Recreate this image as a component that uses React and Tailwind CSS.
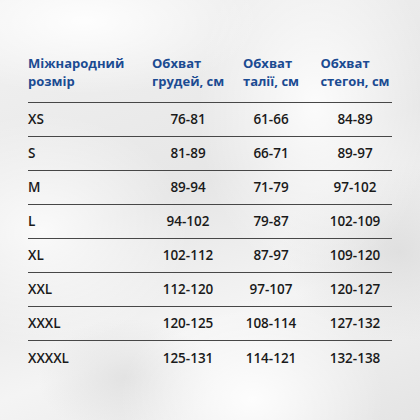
import React from 'react'

const rows = [
  ['XS', '76-81', '61-66', '84-89'],
  ['S', '81-89', '66-71', '89-97'],
  ['M', '89-94', '71-79', '97-102'],
  ['L', '94-102', '79-87', '102-109'],
  ['XL', '102-112', '87-97', '109-120'],
  ['XXL', '112-120', '97-107', '120-127'],
  ['XXXL', '120-125', '108-114', '127-132'],
  ['XXXXL', '125-131', '114-121', '132-138'],
]

const grid = 'grid grid-cols-[124px_72px_94px_74px]'

const App = () => {
  return (
    <div
      className="relative h-[420px] w-[420px] overflow-hidden bg-[#ededed]"
      style={{ fontFamily: '"Open Sans", "DejaVu Sans", sans-serif' }}
    >
      {/* Silk background */}
      <div className="pointer-events-none absolute inset-0 bg-[radial-gradient(60%_25%_at_20%_5%,rgba(255,255,255,0.9),transparent_70%),radial-gradient(40%_60%_at_75%_25%,rgba(255,255,255,0.85),transparent_70%),radial-gradient(50%_40%_at_10%_55%,rgba(255,255,255,0.8),transparent_70%),radial-gradient(45%_35%_at_60%_95%,rgba(255,255,255,0.9),transparent_70%),radial-gradient(40%_30%_at_95%_60%,rgba(215,215,215,0.7),transparent_70%),radial-gradient(30%_20%_at_30%_90%,rgba(220,220,220,0.7),transparent_70%),linear-gradient(160deg,#f2f2f2,#e6e6e6_45%,#f4f4f4_70%,#e4e4e4)]" />

      <div className="relative px-[28px] pt-[54px]">
        {/* Header */}
        <div className={`${grid} border-b border-[#474747] pb-[12px] text-[13px] font-bold leading-[18px] text-[#1b4b92]`}>
          <div>
            Міжнародний
            <br />
            розмір
          </div>
          <div>
            Обхват
            <br />
            <span className="whitespace-nowrap">грудей, см</span>
          </div>
          <div className="text-center">
            <span className="inline-block whitespace-nowrap text-left">
              Обхват
              <br />
              талії, см
            </span>
          </div>
          <div className="text-center">
            <span className="inline-block whitespace-nowrap text-left">
              Обхват
              <br />
              стегон, см
            </span>
          </div>
        </div>

        {/* Rows */}
        {rows.map((r, i) => (
          <div
            key={r[0]}
            className={`${grid} h-[34px] items-center text-[13.5px] font-semibold text-[#1a1a1a] ${
              i < rows.length - 1 ? 'border-b border-[#474747]' : ''
            }`}
          >
            <div>{r[0]}</div>
            <div className="text-center">{r[1]}</div>
            <div className="text-center">{r[2]}</div>
            <div className="text-center">{r[3]}</div>
          </div>
        ))}
      </div>
    </div>
  )
}

export default App
